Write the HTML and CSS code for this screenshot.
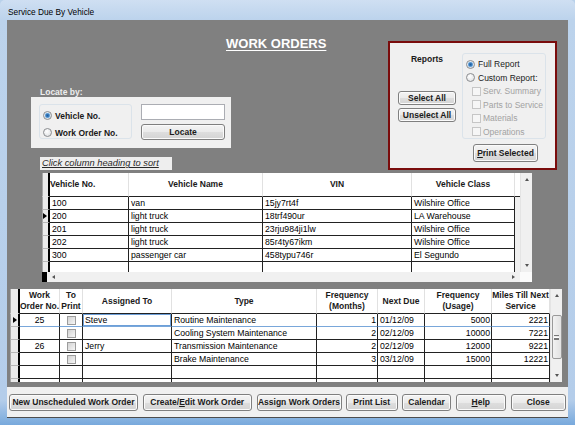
FILE: index.html
```html
<!DOCTYPE html>
<html lang="en">
<head>
    <meta charset="UTF-8">
    <meta name="viewport" content="width=device-width, initial-scale=1.0">
    <title>Service Due By Vehicle</title>
    <link rel="stylesheet" href="styles.css">
</head>
<body>
<div class="window">
    <div class="titlebar">Service Due By Vehicle</div>
    <div class="client">
        <div class="top">
            <div class="left">
                <div class="title">WORK ORDERS</div>
                <div class="locate-label">Locate by:</div>
                <div class="locate-panel">
                    <div class="optgroup locate-opts">
                        <div class="opt"><span class="rb on"></span>Vehicle No.</div>
                        <div class="opt"><span class="rb"></span>Work Order No.</div>
                    </div>
                    <div class="locate-side">
                        <div class="textbox"></div>
                        <button class="btn btn-locate">Locate</button>
                    </div>
                </div>
                <div class="sort-label">Click column heading to sort</div>
            </div>
            <div class="reports">
                <div class="rep-row">
                    <div class="rep-left">
                        <div class="rep-label">Reports</div>
                        <button class="btn btn-sel">Select All</button>
                        <button class="btn btn-unsel">Unselect All</button>
                    </div>
                    <div class="optgroup rep-opts">
                        <div class="opt"><span class="rb on"></span>Full Report</div>
                        <div class="opt"><span class="rb"></span><span class="clip">Custom Report:</span></div>
                        <div class="opt off"><span class="cb"></span>Serv. Summary</div>
                        <div class="opt off"><span class="cb"></span>Parts to Service</div>
                        <div class="opt off"><span class="cb"></span>Materials</div>
                        <div class="opt off"><span class="cb"></span>Operations</div>
                    </div>
                </div>
                <button class="btn btn-print"><u>P</u>rint Selected</button>
            </div>
        </div>

        <div class="grid grid-top">
            <div class="view">
                <div class="row head">
                    <div class="sel"></div>
                    <div class="th th-left">Vehicle No.</div>
                    <div class="th">Vehicle Name</div>
                    <div class="th">VIN</div>
                    <div class="th">Vehicle Class</div>
                    <div class="fill"></div>
                </div>
                <div class="row">
                    <div class="sel"></div>
                    <div class="td">100</div><div class="td">van</div><div class="td">15jy7rt4f</div><div class="td">Wilshire Office</div>
                    <div class="fill"></div>
                </div>
                <div class="row">
                    <div class="sel"><span class="arrow"></span></div>
                    <div class="td">200</div><div class="td">light truck</div><div class="td">18trf490ur</div><div class="td">LA Warehouse</div>
                    <div class="fill"></div>
                </div>
                <div class="row">
                    <div class="sel"></div>
                    <div class="td">201</div><div class="td">light truck</div><div class="td">23rju984ji1lw</div><div class="td">Wilshire Office</div>
                    <div class="fill"></div>
                </div>
                <div class="row">
                    <div class="sel"></div>
                    <div class="td">202</div><div class="td">light truck</div><div class="td">85r4ty67ikm</div><div class="td">Wilshire Office</div>
                    <div class="fill"></div>
                </div>
                <div class="row">
                    <div class="sel"></div>
                    <div class="td">300</div><div class="td">passenger car</div><div class="td">458typu746r</div><div class="td">El Segundo</div>
                    <div class="fill"></div>
                </div>
                <div class="row">
                    <div class="sel"></div>
                    <div class="td"></div><div class="td"></div><div class="td"></div><div class="td"></div>
                    <div class="fill"></div>
                </div>
            </div>
            <div class="vscroll">
                <span class="ar up"></span>
                <span class="ar down"></span>
            </div>
            <div class="hscroll">
                <span class="hs-sel"></span>
                <span class="ar lt"></span>
                <span class="ar rt"></span>
            </div>
            <div class="corner"></div>
        </div>

        <div class="grid grid-bottom">
            <div class="view">
                <div class="row head">
                    <div class="sel"></div>
                    <div class="th">Work<br>Order No.</div>
                    <div class="th">To<br>Print</div>
                    <div class="th">Assigned To</div>
                    <div class="th">Type</div>
                    <div class="th">Frequency<br>(Months)</div>
                    <div class="th">Next Due</div>
                    <div class="th">Frequency<br>(Usage)</div>
                    <div class="th">Miles Till Next<br>Service</div>
                </div>
                <div class="row cur">
                    <div class="sel"><span class="arrow"></span></div>
                    <div class="td c">25</div>
                    <div class="td cbx"><span class="gcb"></span></div>
                    <div class="td focus">Steve</div>
                    <div class="td">Routine Maintenance</div>
                    <div class="td r">1</div>
                    <div class="td">01/12/09</div>
                    <div class="td r">5000</div>
                    <div class="td r">2221</div>
                </div>
                <div class="row">
                    <div class="sel"></div>
                    <div class="td c"></div>
                    <div class="td cbx"><span class="gcb"></span></div>
                    <div class="td"></div>
                    <div class="td">Cooling System Maintenance</div>
                    <div class="td r">2</div>
                    <div class="td">02/12/09</div>
                    <div class="td r">10000</div>
                    <div class="td r">7221</div>
                </div>
                <div class="row">
                    <div class="sel"></div>
                    <div class="td c">26</div>
                    <div class="td cbx"><span class="gcb"></span></div>
                    <div class="td">Jerry</div>
                    <div class="td">Transmission Maintenance</div>
                    <div class="td r">2</div>
                    <div class="td">02/12/09</div>
                    <div class="td r">12000</div>
                    <div class="td r">9221</div>
                </div>
                <div class="row">
                    <div class="sel"></div>
                    <div class="td c"></div>
                    <div class="td cbx"><span class="gcb"></span></div>
                    <div class="td"></div>
                    <div class="td">Brake Maintenance</div>
                    <div class="td r">3</div>
                    <div class="td">03/12/09</div>
                    <div class="td r">15000</div>
                    <div class="td r">12221</div>
                </div>
                <div class="row">
                    <div class="sel"></div>
                    <div class="td"></div><div class="td"></div><div class="td"></div><div class="td"></div>
                    <div class="td"></div><div class="td"></div><div class="td"></div><div class="td"></div>
                </div>
                <div class="row">
                    <div class="sel"></div>
                    <div class="td"></div><div class="td"></div><div class="td"></div><div class="td"></div>
                    <div class="td"></div><div class="td"></div><div class="td"></div><div class="td"></div>
                </div>
            </div>
            <div class="vscroll vscroll-b">
                <span class="ar up"></span>
                <span class="thumb"><span class="grip"></span></span>
                <span class="ar down"></span>
            </div>
        </div>
    </div>
    <div class="footer">
        <button class="btn b-new">New Unscheduled Work Order</button>
        <button class="btn b-edit">Create/<u>E</u>dit Work Order</button>
        <button class="btn b-assign">Assign Work Orders</button>
        <button class="btn b-print">Print List</button>
        <button class="btn b-cal">Calendar</button>
        <button class="btn b-help"><u>H</u>elp</button>
        <button class="btn b-close">Close</button>
    </div>
</div>
</body>
</html>
```

FILE: styles.css
```css
*{
    box-sizing: border-box;
}
body{
    margin: 0;
    font-family: "Liberation Sans", Arial, sans-serif;
    background: #b9d1ea;
}
.window{
    width: 575px;
    height: 425px;
    overflow: hidden;
    background: linear-gradient(#cfdff2, #bcd3ec 20px, #b4cdea 400px, #78a9dc);
    border-radius: 5px 5px 0 0;
}
.titlebar{
    height: 20px;
    padding: 6px 0 0 8px;
    font-size: 8.3px;
    line-height: 12px;
    color: #000;
}
.client{
    height: 367px;
    margin: 0 7px;
    background: #808080;
}
.top{
    height: 153px;
    display: flex;
}
.left{
    width: 330px;
}
.title{
    margin: 16px 0 0 219px;
    font-size: 13px;
    line-height: 15px;
    font-weight: bold;
    color: #fff;
    text-decoration: underline;
    text-underline-offset: 2px;
    white-space: nowrap;
}
.locate-label{
    margin: 36px 0 0 33px;
    font-size: 8.5px;
    line-height: 10px;
    font-weight: bold;
    color: #eeeeee;
}
.locate-panel{
    display: flex;
    width: 200px;
    height: 51px;
    margin-left: 24px;
    padding: 7px 0 0 8px;
    background: #f0f0f0;
}
.optgroup{
    border: 1px solid #dbe3ea;
    border-radius: 3px;
}
.opt{
    display: flex;
    align-items: center;
    white-space: nowrap;
    color: #1a1a1a;
}
.rb{
    flex: none;
    width: 9px;
    height: 9px;
    margin-right: 3px;
    border: 1px solid #8b8d90;
    border-radius: 50%;
    background: radial-gradient(circle at 40% 35%, #ffffff, #d9dbdd);
}
.rb.on{
    background: radial-gradient(circle, #1f5f9e 0, #3d7fbf 1.6px, #9cc7ec 2.6px, transparent 3.1px),
                radial-gradient(circle at 40% 35%, #ffffff, #d9dbdd);
}
.locate-opts{
    width: 93px;
    height: 35px;
    padding: 2px 0 0 3px;
}
.locate-opts .opt{
    height: 17px;
    font-size: 8.5px;
    font-weight: bold;
}
.locate-side{
    width: 84px;
    margin-left: 9px;
}
.textbox{
    height: 16px;
    background: #fff;
    border: 1px solid #abadb3;
}
.btn{
    display: block;
    padding: 0;
    font-family: inherit;
    font-size: 8.5px;
    font-weight: bold;
    color: #1b1b1b;
    border: 1px solid #7f7f7f;
    border-radius: 3px;
    box-shadow: inset 0 0 0 1px #fbfbfb;
    background: linear-gradient(#f4f4f4, #eaeaea 50%, #dedede 51%, #d4d4d4);
    white-space: nowrap;
}
.btn-locate{
    width: 84px;
    height: 16px;
    margin-top: 4px;
}
.sort-label{
    width: 132px;
    height: 13px;
    margin: 9px 0 0 33px;
    padding-left: 2px;
    background: #eeeeee;
    font-size: 9.3px;
    line-height: 13px;
    font-style: italic;
    text-decoration: underline;
    color: #2a2a2a;
    white-space: nowrap;
}

/* reports box */
.reports{
    width: 169px;
    height: 129px;
    margin: 21px 11px 0 auto;
    border: 2px solid #7a0c0c;
    background: #f0f0f0;
}
.rep-row{
    display: flex;
}
.rep-left{
    width: 58px;
    margin-left: 8px;
}
.rep-label{
    margin-top: 11px;
    height: 10px;
    font-size: 8.5px;
    line-height: 10px;
    font-weight: bold;
    text-align: center;
    color: #1a1a1a;
}
.btn-sel{
    width: 58px;
    height: 14px;
    margin-top: 27px;
    line-height: 12px;
}
.btn-unsel{
    width: 58px;
    height: 14px;
    margin-top: 3px;
    line-height: 12px;
}
.rep-opts{
    width: 84px;
    height: 86px;
    margin: 10px 0 0 6px;
    padding-top: 3.5px;
    overflow: hidden;
}
.rep-opts .opt{
    height: 13.5px;
    font-size: 8.5px;
}
.rep-opts .rb{
    margin-left: 3px;
}
.clip{
    display: inline-block;
    width: 64px;
    overflow: hidden;
}
.cb{
    flex: none;
    width: 9px;
    height: 9px;
    margin: 0 2px 0 9px;
    border: 1px solid #c6c6c6;
    background: #f6f6f6;
}
.opt.off{
    color: #a2a2a2;
}
.btn-print{
    width: 65px;
    height: 18px;
    margin: 5px 0 0 83px;
}

/* datasheets */
.grid{
    display: grid;
}
.view{
    overflow: hidden;
    background: #fff;
}
.row{
    display: grid;
    height: 13px;
}
.td{
    padding: 0 2px;
    font-size: 8.7px;
    line-height: 12px;
    color: #000;
    white-space: nowrap;
    overflow: hidden;
    border-right: 1px solid #222;
    border-bottom: 1px solid #222;
}
.td.r{
    text-align: right;
    padding-right: 1px;
}
.td.c{
    text-align: center;
}
.th{
    display: flex;
    align-items: center;
    justify-content: center;
    text-align: center;
    font-size: 8.5px;
    line-height: 11px;
    font-weight: bold;
    color: #1a1a1a;
    background: #fff;
    border-right: 1px solid #e1e1e1;
    border-bottom: 1px solid #222;
    white-space: nowrap;
}
.th-left{
    justify-content: flex-start;
}
.sel{
    display: flex;
    align-items: center;
    justify-content: flex-end;
    padding-right: 1px;
    background: #ebebeb;
    border-left: 1px solid #a8a8a8;
    border-right: 2px solid #000;
    border-bottom: 1px solid #b8b8b8;
}
.head .sel{
    border-bottom-color: #ebebeb;
}
.arrow{
    width: 0;
    height: 0;
    border-left: 4px solid #000;
    border-top: 3px solid transparent;
    border-bottom: 3px solid transparent;
}
.fill{
    background: #f0f0f0;
}
.head .fill{
    background: #fff;
    border-bottom: 1px solid #222;
}
.vscroll{
    display: flex;
    flex-direction: column;
    justify-content: space-between;
    align-items: center;
    padding: 5px 0;
    background: #f0f0f0;
    border-left: 1px solid #e4e4e4;
}
.ar{
    width: 0;
    height: 0;
}
.ar.up{
    border-bottom: 3px solid #555;
    border-left: 2.5px solid transparent;
    border-right: 2.5px solid transparent;
}
.ar.down{
    border-top: 3px solid #555;
    border-left: 2.5px solid transparent;
    border-right: 2.5px solid transparent;
}
.ar.lt{
    margin-left: 5px;
    border-right: 3px solid #555;
    border-top: 2.5px solid transparent;
    border-bottom: 2.5px solid transparent;
}
.ar.rt{
    margin: 0 5px 0 auto;
    border-left: 3px solid #555;
    border-top: 2.5px solid transparent;
    border-bottom: 2.5px solid transparent;
}
.hscroll{
    display: flex;
    align-items: center;
    background: #f0f0f0;
}
.hs-sel{
    align-self: stretch;
    width: 5px;
    background: #000;
}
.corner{
    background: #fbfbfb;
}

.grid-top{
    width: 490px;
    grid-template-columns: 478px 12px;
    grid-template-rows: 99px 10px;
    margin-left: 35px;
}
.grid-top .row{
    grid-template-columns: 8px 79px 134px 149px 103px 5px;
}
.grid-top .head{
    height: 24px;
}

.grid-bottom{
    width: 552px;
    height: 93px;
    grid-template-columns: 540px 12px;
    margin: 7px 0 0 3px;
}
.grid-bottom .row{
    grid-template-columns: 10px 40px 23px 89px 145px 61px 47px 67px 58px;
}
.grid-bottom .head{
    height: 25px;
}
.cur .td{
    border-bottom-color: #79a7da;
}
.td.focus{
    box-shadow: inset 0 0 0 1px #6d9fd8;
}
.td.cbx{
    display: flex;
    justify-content: center;
    padding-top: 2px;
}
.gcb{
    width: 9px;
    height: 9px;
    border: 1px solid #9c9c9c;
    background: linear-gradient(135deg, #d2d2d2, #f6f6f6);
}
.vscroll-b{
    justify-content: flex-start;
}
.vscroll-b .thumb{
    display: flex;
    align-items: center;
    justify-content: center;
    width: 10px;
    height: 44px;
    margin-top: 18px;
    border: 1px solid #9a9a9a;
    border-radius: 2px;
    background: linear-gradient(90deg, #f2f2f2, #e2e2e2);
}
.grip{
    width: 5px;
    height: 5px;
    border-top: 1px solid #777;
    border-bottom: 1px solid #777;
    background: linear-gradient(#fff 0 1px, #777 1px 2px, transparent 2px);
    background-position: 0 1px;
}
.vscroll-b .down{
    margin-top: auto;
}

/* command buttons */
.footer{
    display: flex;
    gap: 4.5px;
    height: 31px;
    margin: 0 7px;
    padding: 7px 0 0 2px;
    background: #f0f0f0;
    border-bottom: 1px solid #4d4d4d;
}
.footer .btn{
    height: 17px;
    line-height: 15px;
}
.b-new{ width: 129px; }
.b-edit{ width: 109.5px; }
.b-assign{ width: 85px; }
.b-print{ width: 51.5px; }
.b-cal{ width: 49px; }
.b-help{ width: 50.5px; }
.b-close{ width: 55.5px; }
```
